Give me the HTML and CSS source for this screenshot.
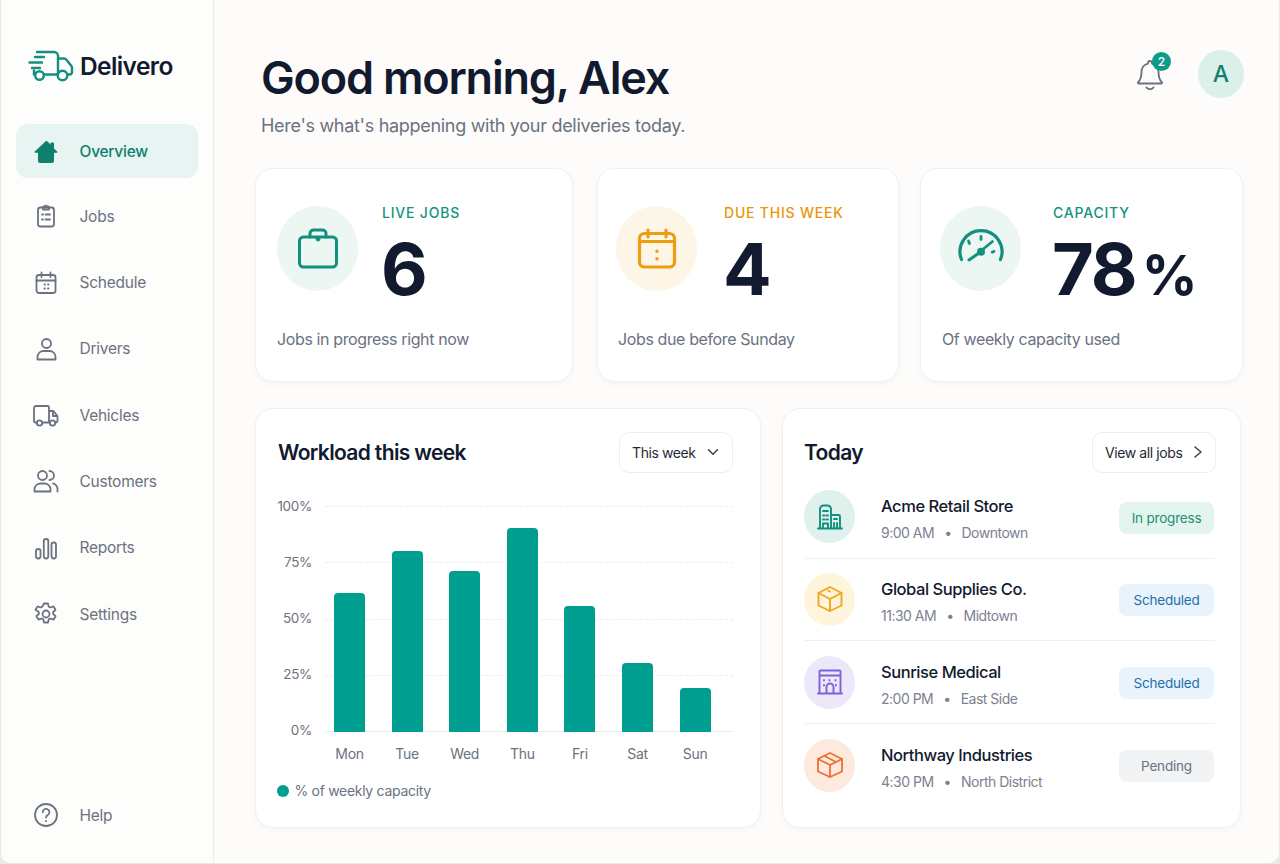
FILE: index.html
```html
<!DOCTYPE html>
<html lang="en">
<head>
<meta charset="utf-8">
<title>Delivero</title>
<link rel="stylesheet" href="styles.css">
</head>
<body>
<div class="window">
  <aside class="sidebar">
    <div class="brand">
      <svg class="logo" viewBox="0 0 46 32" fill="none" stroke="#12907f" stroke-width="2.4" stroke-linecap="round" stroke-linejoin="round">
        <path d="M9 2H26a4 4 0 0 1 4 4V24.500"/>
        <path d="M16.500 24.500H28.500"/>
        <path d="M30 8.500h6a3 3 0 0 1 2.400 1.200l5 6.300a3 3 0 0 1 .6 1.800V22a2.500 2.500 0 0 1-2.500 2.500H40"/>
        <path d="M7 7H16M1.500 12.500H14M4 18H12"/>
        <path d="M6 20.500V24.500"/>
        <circle cx="11.500" cy="25.500" r="4.300"/>
        <circle cx="34.500" cy="25.500" r="4.800"/>
      </svg>
      <span class="brand-name">Delivero</span>
    </div>
    <nav class="nav">
      <a class="nav-item active">
        <svg class="nav-icon nav-home" viewBox="0 0 24 24"><path d="M12 1 .8 11.500c-.5.5-.2 1.300.5 1.300H4V21a2 2 0 0 0 2 2h12a2 2 0 0 0 2-2v-8.200h2.700c.7 0 1-.8.5-1.300L20 8.400V3.500a1 1 0 0 0-1-1h-1.500a1 1 0 0 0-1 1v.9L13 1a1.400 1.400 0 0 0-1 0z"/></svg>
        <span>Overview</span>
      </a>
      <a class="nav-item">
        <svg class="nav-icon" viewBox="0 0 24 24"><rect x="4" y="3.500" width="16" height="19" rx="2.500"/><path d="M9 5.500V3.500a1 1 0 0 1 1-1h.8a1.300 1.300 0 0 1 2.400 0h.8a1 1 0 0 1 1 1v2z"/><path d="M8 10.500h1M11.500 10.500H16M8 15.500h1M11.500 15.500H16"/></svg>
        <span>Jobs</span>
      </a>
      <a class="nav-item">
        <svg class="nav-icon" viewBox="0 0 24 24"><rect x="2.500" y="4" width="19" height="18" rx="2.500"/><path d="M2.500 9.500h19M7.500 1.500V6M16.500 1.500V6M10.500 13.500h.5M14 13.500h.5M10.500 17.500h.5M14 17.500h.5"/></svg>
        <span>Schedule</span>
      </a>
      <a class="nav-item">
        <svg class="nav-icon" viewBox="0 0 24 24"><circle cx="12.500" cy="6.500" r="4.500"/><path d="M3.500 22.500v-3a6 6 0 0 1 6-5.500h6a6 6 0 0 1 6 5.500v3z"/></svg>
        <span>Drivers</span>
      </a>
      <a class="nav-item">
        <svg class="nav-icon nav-icon-wide" viewBox="0 0 26 24"><path d="M4 19.500H2.500a1.500 1.500 0 0 1-1.500-1.500V5a2 2 0 0 1 2-2h11.500a1.500 1.500 0 0 1 1.500 1.500v15h-6.500"/><path d="M16 8h4.500l4 5v5a1.500 1.500 0 0 1-1.500 1.500h-.5"/><path d="M20 8.500V13h4"/><circle cx="6.500" cy="20" r="2.700"/><circle cx="19.500" cy="20" r="2.700"/></svg>
        <span>Vehicles</span>
      </a>
      <a class="nav-item">
        <svg class="nav-icon nav-icon-wide" viewBox="0 0 26 24"><circle cx="9.500" cy="6.500" r="4.500"/><path d="M1.500 22.500V20a6 6 0 0 1 6-5.500h4a6 6 0 0 1 6 5.500v2.500z"/><path d="M16.500 2a4.500 4.500 0 0 1 0 9"/><path d="M20 14.500a6 6 0 0 1 4.500 5.500v2.500"/></svg>
        <span>Customers</span>
      </a>
      <a class="nav-item">
        <svg class="nav-icon" viewBox="0 0 24 24"><rect x="2" y="13" width="4.500" height="9.500" rx="2.200"/><rect x="9.800" y="3" width="4.500" height="19.500" rx="2.200"/><rect x="17.500" y="6.500" width="4.500" height="16" rx="2.200"/></svg>
        <span>Reports</span>
      </a>
      <a class="nav-item">
        <svg class="nav-icon" viewBox="0 0 24 24"><circle cx="12" cy="12" r="3.500"/><path d="M10 1.500h4l.7 3.100 1.800.9 3-1.100 2 3.400-2.300 2.200v2l2.300 2.200-2 3.400-3-1.100-1.800.9-.7 3.100h-4l-.7-3.100-1.800-.9-3 1.100-2-3.400 2.300-2.200v-2L1.500 7.800l2-3.400 3 1.100 1.800-.9z"/></svg>
        <span>Settings</span>
      </a>
    </nav>
    <a class="nav-item help">
      <svg class="nav-icon" viewBox="0 0 24 24"><circle cx="12" cy="12" r="11"/><path d="M8.800 9.200a3.300 3.300 0 1 1 5 2.800c-1.100.7-1.800 1.300-1.800 2.600M12 18v.2"/></svg>
      <span>Help</span>
    </a>
  </aside>

  <main class="main">
    <header class="top">
      <div class="greeting">
        <h1>Good morning, Alex</h1>
        <p>Here's what's happening with your deliveries today.</p>
      </div>
      <div class="top-actions">
        <div class="bell">
          <svg viewBox="0 0 28 32" fill="none" stroke="#6b7280" stroke-width="1.900" stroke-linecap="round" stroke-linejoin="round"><path d="M14 3a2 2 0 0 1 2 2v.6a8.500 8.500 0 0 1 6.500 8.400c0 6 1.500 8.500 3.500 10.500a.7.7 0 0 1-.5 1H2.500a.7.7 0 0 1-.5-1C4 22.500 5.500 20 5.500 14A8.500 8.500 0 0 1 12 5.600V5a2 2 0 0 1 2-2z"/><path d="M10.500 29.500a4.500 4.500 0 0 0 7 0"/></svg>
          <span class="badge">2</span>
        </div>
        <div class="avatar">A</div>
      </div>
    </header>

    <section class="stats">
      <article class="card stat stat-a">
        <div class="stat-row">
          <div class="stat-icon teal">
            <svg viewBox="0 0 40 40" fill="none" stroke="#12907f" stroke-width="3" stroke-linecap="round" stroke-linejoin="round"><rect x="1.500" y="8.500" width="37" height="30" rx="4"/><path d="M12 8.500V5a3.500 3.500 0 0 1 3.500-3.500h9A3.500 3.500 0 0 1 28 5v3.500"/><path d="M18 10h4v.5a2 2 0 0 1-4 0z" fill="#12907f" stroke-width="1"/></svg>
          </div>
          <div>
            <div class="stat-label label-teal">LIVE JOBS</div>
            <div class="stat-value">6</div>
          </div>
        </div>
        <p class="stat-desc">Jobs in progress right now</p>
      </article>
      <article class="card stat stat-b">
        <div class="stat-row">
          <div class="stat-icon amber">
            <svg viewBox="0 0 40 40" fill="none" stroke="#ee9d12" stroke-width="3.200" stroke-linecap="round" stroke-linejoin="round"><rect x="2.500" y="5" width="35" height="33.500" rx="5"/><path d="M2.500 13h35M11 1.500v7M29 1.500v7"/><path d="M20 22.500v.4M20 30v.4"/></svg>
          </div>
          <div>
            <div class="stat-label label-amber">DUE THIS WEEK</div>
            <div class="stat-value">4</div>
          </div>
        </div>
        <p class="stat-desc">Jobs due before Sunday</p>
      </article>
      <article class="card stat stat-c">
        <div class="stat-row">
          <div class="stat-icon teal">
            <svg class="gauge" viewBox="0 0 46 40" fill="none" stroke="#12907f" stroke-width="3.200" stroke-linecap="round" stroke-linejoin="round"><path d="M3.500 30.500a21 21 0 1 1 39 0"/><path d="M23 7.500v3M10.500 12l1 2.500M36 22.500l-1.800.6" stroke-width="2.800"/><path d="M11 31l10-7" stroke-width="3"/><path d="M24 21l10.500-8.500" stroke-width="2.600"/><circle cx="23" cy="22.800" r="4" fill="#12907f" stroke="none"/></svg>
          </div>
          <div>
            <div class="stat-label label-teal">CAPACITY</div>
            <div class="stat-value">78<span class="pct">%</span></div>
          </div>
        </div>
        <p class="stat-desc">Of weekly capacity used</p>
      </article>
    </section>

    <section class="lower">
      <article class="card workload">
        <div class="card-head">
          <h2>Workload this week</h2>
          <div class="btn btn-week">This week
            <svg viewBox="0 0 12 12" fill="none" stroke="#374151" stroke-width="1.500" stroke-linecap="round" stroke-linejoin="round"><path d="M1.500 3.800 6 8.200l4.500-4.400"/></svg>
          </div>
        </div>
        <div class="chart">
          <div class="y-axis"><span>100%</span><span>75%</span><span>50%</span><span>25%</span><span>0%</span></div>
          <div class="plot-col">
            <div class="plot">
              <div class="grid-lines"><i></i><i></i><i></i><i></i><i class="base"></i></div>
              <div class="bars">
                <div class="bar-slot"><div class="bar" style="height:139px"></div></div>
                <div class="bar-slot"><div class="bar" style="height:181px"></div></div>
                <div class="bar-slot"><div class="bar" style="height:161px"></div></div>
                <div class="bar-slot"><div class="bar" style="height:204px"></div></div>
                <div class="bar-slot"><div class="bar" style="height:126px"></div></div>
                <div class="bar-slot"><div class="bar" style="height:69px"></div></div>
                <div class="bar-slot"><div class="bar" style="height:44px"></div></div>
              </div>
            </div>
            <div class="days"><span>Mon</span><span>Tue</span><span>Wed</span><span>Thu</span><span>Fri</span><span>Sat</span><span>Sun</span></div>
          </div>
        </div>
        <div class="legend"><i class="dot"></i>% of weekly capacity</div>
      </article>

      <article class="card today">
        <div class="card-head">
          <h2>Today</h2>
          <div class="btn btn-all">View all jobs
            <svg viewBox="0 0 12 12" fill="none" stroke="#374151" stroke-width="1.500" stroke-linecap="round" stroke-linejoin="round"><path d="M3 1 9 6l-6 5"/></svg>
          </div>
        </div>
        <ul class="jobs">
          <li class="job">
            <div class="job-icon bg-teal">
              <svg viewBox="0 0 26 26" fill="none" stroke="#12907f" stroke-width="1.900" stroke-linecap="round" stroke-linejoin="round"><path d="M1 24.500h24M3 24.500V5a3.500 3.500 0 0 1 3.500-3.500h4A3.500 3.500 0 0 1 14 5v19.500M14 11h7.500a1.500 1.500 0 0 1 1.500 1.500v12M6 7h5M6 11.500h1.500M9.500 11.500H11M6 15.500h1.500M9.500 15.500H11M6 24v-4.500h5V24M17 15h3M17 19v5.500h3V19"/></svg>
            </div>
            <div class="job-text">
              <div class="job-name">Acme Retail Store</div>
              <div class="job-meta"><span>9:00 AM</span><i>•</i><span>Downtown</span></div>
            </div>
            <span class="pill pill-green">In progress</span>
          </li>
          <li class="job">
            <div class="job-icon bg-amber">
              <svg viewBox="0 0 26 26" fill="none" stroke="#f0a81c" stroke-width="1.900" stroke-linecap="round" stroke-linejoin="round"><path d="M13 1 24.500 7v12.500L13 25 1.500 19.500V7z"/><path d="M1.500 7 13 13l11.500-6M13 13v12M11 4.500l2 1"/></svg>
            </div>
            <div class="job-text">
              <div class="job-name">Global Supplies Co.</div>
              <div class="job-meta"><span>11:30 AM</span><i>•</i><span>Midtown</span></div>
            </div>
            <span class="pill pill-blue">Scheduled</span>
          </li>
          <li class="job">
            <div class="job-icon bg-violet">
              <svg viewBox="0 0 26 26" fill="none" stroke="#7a62dc" stroke-width="1.900" stroke-linecap="round" stroke-linejoin="round"><path d="M1 24.500h24M2.500 24.500V2.500a1 1 0 0 1 1-1h19a1 1 0 0 1 1 1v22M2.500 6.500h21M7 11v.5M12.500 11v.5M18.500 11v.5M7 16v.5M19 16v.5M9.500 24.500V18a3.500 3.500 0 0 1 7 0v6.500"/></svg>
            </div>
            <div class="job-text">
              <div class="job-name">Sunrise Medical</div>
              <div class="job-meta"><span>2:00 PM</span><i>•</i><span>East Side</span></div>
            </div>
            <span class="pill pill-blue">Scheduled</span>
          </li>
          <li class="job">
            <div class="job-icon bg-orange">
              <svg viewBox="0 0 26 26" fill="none" stroke="#ea7130" stroke-width="1.800" stroke-linecap="round" stroke-linejoin="round"><path d="M13 1 25 7v12.500L13 25 1 19.500V7z"/><path d="M1 7l12 6 12-6M13 13v12M7.500 4 19 10"/></svg>
            </div>
            <div class="job-text">
              <div class="job-name">Northway Industries</div>
              <div class="job-meta"><span>4:30 PM</span><i>•</i><span>North District</span></div>
            </div>
            <span class="pill pill-gray">Pending</span>
          </li>
        </ul>
      </article>
    </section>
  </main>
</div>
</body>
</html>
```
FILE: styles.css
```css
* { box-sizing: border-box; }
html, body { margin: 0; height: 100%; }
body {
  background: #e9e9e7;
  font-family: Inter, "Noto Sans", sans-serif;
  color: #111a2e;
  overflow: hidden;
}
h1, h2, p, ul { margin: 0; padding: 0; }
ul { list-style: none; }

.window {
  display: flex;
  width: 1278px;
  height: 863px;
  margin-left: 1px;
  background: #fdfcfa;
  border-radius: 0 0 10px 10px;
  overflow: hidden;
}

.sidebar {
  width: 213px;
  flex: none;
  display: flex;
  flex-direction: column;
  padding: 50px 15px 21px 15px;
  background: #fdfdfc;
  border-right: 1px solid #ecebe8;
}
.brand { display: flex; align-items: center; gap: 6px; height: 32px; padding-left: 12px; }
.logo { width: 46px; height: 32px; flex: none; }
.brand-name { font-size: 24.500px; font-weight: 600; letter-spacing: -0.6px; line-height: 32px; }

.nav { display: flex; flex-direction: column; gap: 12.300px; margin-top: 42px; }
.nav-item {
  display: flex;
  align-items: center;
  gap: 21.500px;
  height: 54px;
  padding-left: 18px;
  border-radius: 12px;
  font-size: 15.500px;
  letter-spacing: -0.25px;
  color: #6b7280;
}
.nav-item.active { margin-bottom: -1px; padding-top: 1px; background: #e8f4f1; color: #0f7f6e; font-weight: 500; }
.nav-icon {
  width: 24px;
  height: 24px;
  flex: none;
  fill: none;
  stroke: #6b7280;
  stroke-width: 1.800;
  stroke-linecap: round;
  stroke-linejoin: round;
}
.nav-home { fill: #0f7f6e; stroke: none; }
.nav-icon-wide { width: 26px; margin: 0 -1px; }
.help { margin-top: auto; }

.main { flex: 1; min-width: 0; padding: 50px 35px 0 41px; }

.top { display: flex; justify-content: space-between; align-items: flex-start; padding-left: 6px; height: 118px; }
.greeting h1 { font-size: 45px; line-height: 56px; font-weight: 600; letter-spacing: -1.2px; }
.greeting p { margin-top: 8px; font-size: 18px; line-height: 24px; color: #6b7280; letter-spacing: -0.3px; }
.top-actions { display: flex; align-items: center; gap: 34px; }
.bell { position: relative; width: 28px; height: 32px; }
.bell svg { display: block; width: 28px; height: 32px; }
.badge {
  position: absolute;
  top: -6px;
  left: 16px;
  width: 19px;
  height: 19px;
  border-radius: 50%;
  background: #0e9a8a;
  color: #fff;
  font-size: 12px;
  font-weight: 500;
  line-height: 19px;
  text-align: center;
}
.avatar {
  width: 46px;
  height: 48px;
  border-radius: 50%;
  background: #dcf0ea;
  color: #0f7f6e;
  font-size: 23px;
  font-weight: 500;
  line-height: 48px;
  text-align: center;
}

.card {
  background: #fff;
  border: 1px solid #f2f0ec;
  border-radius: 18px;
  box-shadow: 0 2px 6px rgba(40, 40, 30, 0.035);
}

.stats { display: flex; gap: 22px; }
.stat { height: 214px; padding: 35px 21px 0; }
.stat-a { width: 318px; margin-right: 2px; }
.stat-b { width: 302px; margin-right: -1px; padding-left: 18px; }
.stat-c { width: 323px; padding-left: 19px; }
.stat-row { display: flex; align-items: flex-start; gap: 24px; height: 123px; }
.stat-b .stat-row { gap: 27px; }
.stat-c .stat-row { gap: 32px; }
.stat-icon {
  width: 81px;
  height: 85px;
  margin-top: 2px;
  border-radius: 50%;
  flex: none;
  display: flex;
  align-items: center;
  justify-content: center;
}
.stat-icon svg { width: 40px; height: 41px; }
.stat-icon svg.gauge { width: 46px; height: 40px; }
.stat-icon.teal { background: #ecf6f3; }
.stat-icon.amber { background: #fdf6e6; }
.stat-label { font-size: 14px; line-height: 17px; font-weight: 500; letter-spacing: 0.8px; }
.label-teal { color: #12927f; }
.label-amber { color: #e8960c; }
.stat-value { margin-top: 9px; margin-left: -1px; font-size: 72px; line-height: 78px; font-weight: 700; letter-spacing: -2px; color: #111a2e; }
.pct { margin-left: 6px; font-size: 55px; font-weight: 700; letter-spacing: 0; }
.stat-desc { font-size: 16px; line-height: 24px; color: #6b7280; letter-spacing: -0.38px; }
.stat-b .stat-desc, .stat-c .stat-desc { margin-left: 2px; }

.lower { display: flex; justify-content: space-between; margin-top: 26px; padding-right: 3px; }
.workload { width: 506px; height: 420px; padding: 23px 27px 0 22px; }
.today { width: 459px; height: 420px; padding: 23px 24px 0 21px; }
.card-head { display: flex; justify-content: space-between; align-items: center; height: 40px; }
.card-head h2 { font-size: 21px; font-weight: 600; letter-spacing: -0.65px; }
.btn {
  display: flex;
  align-items: center;
  height: 41px;
  padding: 0 13px 0 12px;
  border: 1px solid #eeeeea;
  border-radius: 10px;
  font-size: 14px;
  letter-spacing: -0.4px;
  color: #1f2937;
}
.btn svg { width: 12px; height: 12px; }
.btn-week { width: 114px; justify-content: space-between; }
.btn-all { width: 124px; padding-right: 11px; justify-content: space-between; }

.chart { display: flex; gap: 9px; margin-top: 24px; }
.y-axis {
  width: 34px;
  height: 244px;
  display: flex;
  flex-direction: column;
  justify-content: space-between;
  align-items: flex-end;
  font-size: 13.500px;
  line-height: 20px;
  color: #6b7280;
  letter-spacing: -0.3px;
}
.plot-col { width: 412px; padding-top: 10px; }
.plot { position: relative; height: 226px; }
.grid-lines {
  position: absolute;
  inset: 0 0 0 4px;
  display: flex;
  flex-direction: column;
  justify-content: space-between;
}
.grid-lines i { display: block; border-top: 1px dashed #eeeeec; }
.grid-lines i.base { border-top: 1px solid #ececea; }
.bars, .days { display: grid; grid-template-columns: repeat(7, 57.600px); margin-left: -0.300px; }
.bars { position: relative; height: 226px; align-items: end; justify-items: center; }
.bar { width: 31px; background: #009e91; border-radius: 4px 4px 0 0; }
.days {
  margin-top: 11.500px;
  justify-items: center;
  font-size: 14px;
  line-height: 20px;
  color: #6b7280;
  letter-spacing: -0.3px;
}
.legend {
  display: flex;
  align-items: center;
  gap: 5.500px;
  margin-top: 17px;
  margin-left: -1px;
  font-size: 14px;
  line-height: 20px;
  color: #6b7280;
  letter-spacing: -0.3px;
}
.dot { width: 12px; height: 12px; border-radius: 50%; background: #009e91; }

.jobs { margin-top: 4px; margin-right: 1px; }
.job {
  display: flex;
  align-items: center;
  height: 82.670px;
  border-bottom: 1px solid #f0f0ee;
}
.job:last-child { border-bottom: 0; }
.job-icon {
  width: 51px;
  height: 53px;
  border-radius: 50%;
  flex: none;
  display: flex;
  align-items: center;
  justify-content: center;
}
.job-icon svg { width: 26px; height: 26px; }
.bg-teal { background: #def1ec; }
.bg-amber { background: #fef5dc; }
.bg-violet { background: #ece8fa; }
.bg-orange { background: #fde9dd; }
.job-text { flex: 1; margin-left: 26px; padding-top: 5px; }
.job-name { font-size: 16.500px; line-height: 22px; font-weight: 500; letter-spacing: -0.45px; color: #111a2e; }
.job-meta {
  display: flex;
  gap: 10px;
  margin-top: 6px;
  font-size: 14px;
  line-height: 20px;
  color: #7b8290;
  letter-spacing: -0.5px;
}
.job-meta i { font-style: normal; }
.pill {
  width: 95px;
  height: 32px;
  margin-top: 2px;
  margin-right: 1px;
  border-radius: 8px;
  font-size: 13.500px;
  line-height: 32px;
  text-align: center;
  letter-spacing: -0.2px;
}
.pill-green { background: #e3f4ee; color: #1f8f75; }
.pill-blue { background: #e8f3fc; color: #1f6fa8; }
.pill-gray { background: #f2f3f5; color: #6b7280; }
```
